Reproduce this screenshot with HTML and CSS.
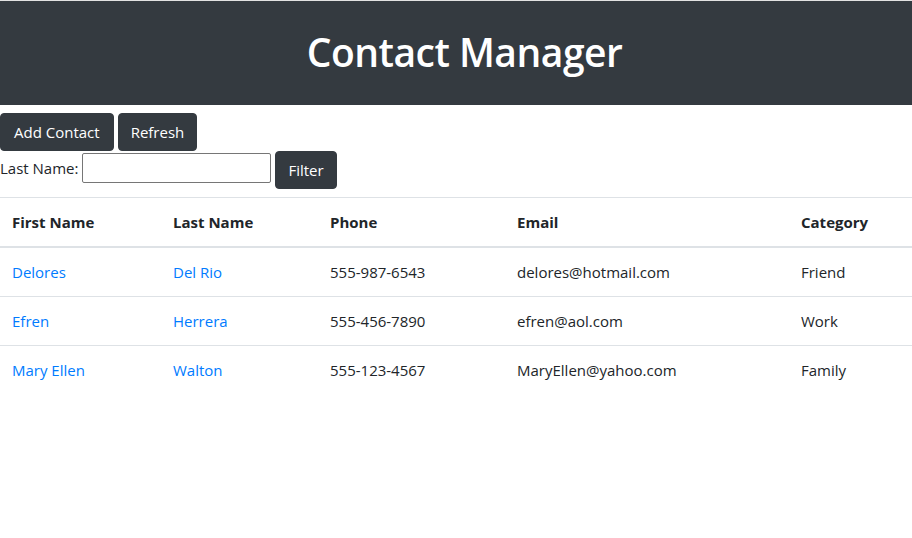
FILE: index.html
```html
<!DOCTYPE html>
<html lang="en">
<head>
<meta charset="utf-8">
<title>Contact Manager</title>
<link rel="stylesheet" href="styles.css">
</head>
<body>
<header class="banner">
  <h1 class="title">Contact Manager</h1>
</header>
<main>
  <div class="actions">
    <button class="btn btn-add">Add Contact</button>
    <button class="btn">Refresh</button>
  </div>
  <form class="filter">
    <label class="filter-label" for="ln">Last Name:</label>
    <input class="filter-input" id="ln" type="text">
    <button class="btn" type="button">Filter</button>
  </form>
  <table class="table">
    <thead>
      <tr>
        <th class="c1">First Name</th>
        <th class="c2">Last Name</th>
        <th class="c3">Phone</th>
        <th class="c4">Email</th>
        <th class="c5">Category</th>
      </tr>
    </thead>
    <tbody>
      <tr>
        <td><a href="#">Delores</a></td>
        <td><a href="#">Del Rio</a></td>
        <td>555-987-6543</td>
        <td>delores@hotmail.com</td>
        <td>Friend</td>
      </tr>
      <tr>
        <td><a href="#">Efren</a></td>
        <td><a href="#">Herrera</a></td>
        <td>555-456-7890</td>
        <td>efren@aol.com</td>
        <td>Work</td>
      </tr>
      <tr>
        <td><a href="#">Mary Ellen</a></td>
        <td><a href="#">Walton</a></td>
        <td>555-123-4567</td>
        <td>MaryEllen@yahoo.com</td>
        <td>Family</td>
      </tr>
    </tbody>
  </table>
</main>
</body>
</html>
```
FILE: styles.css
```css
* { box-sizing: border-box; }
html, body { margin: 0; padding: 0; }
body {
  font-family: "Open Sans", "Noto Sans", sans-serif;
  font-size: 15px;
  line-height: 24px;
  color: #212529;
  background: #fff;
}
.banner {
  border-top: 1px solid #e2e2e2;
  background: #343a40;
  height: 105px;
  padding-left: 17px;
  display: flex;
  align-items: center;
  justify-content: center;
}
.title {
  margin: 0 0 2px;
  color: #fff;
  font-size: 39px;
  font-weight: 600;
  line-height: 1.2;
  letter-spacing: -0.5px;
}
.actions {
  margin-top: 8px;
  display: flex;
  gap: 4px;
}
.btn {
  font-family: inherit;
  font-size: 15px;
  line-height: 24px;
  height: 38px;
  padding: 6px 12px;
  color: #fff;
  background: #343a40;
  border: 1px solid #343a40;
  border-radius: 4px;
}
.btn-add { padding: 6px 13px; }
.filter {
  display: flex;
  align-items: flex-start;
  gap: 4px;
  margin: 0;
}
.filter-label { font-size: 15px; margin-top: 5px; }
.filter-input {
  margin-top: 2px;
  width: 189px;
  height: 30px;
  border: 1px solid #767676;
  border-radius: 2px;
  font-family: inherit;
  font-size: 14px;
}
.table {
  margin-top: 8px;
  width: 100%;
  border-collapse: collapse;
  text-align: left;
}
.table th, .table td {
  padding: 12px;
  line-height: 24px;
  border-top: 1px solid #dee2e6;
  vertical-align: top;
}
.table th { font-weight: 700; }
.table thead th { border-bottom: 2px solid #dee2e6; }
.table a { color: #007bff; text-decoration: none; }
.c1 { width: 161px; }
.c2 { width: 157px; }
.c3 { width: 187px; }
.c4 { width: 284px; }
.c5 { width: 123px; }
```
